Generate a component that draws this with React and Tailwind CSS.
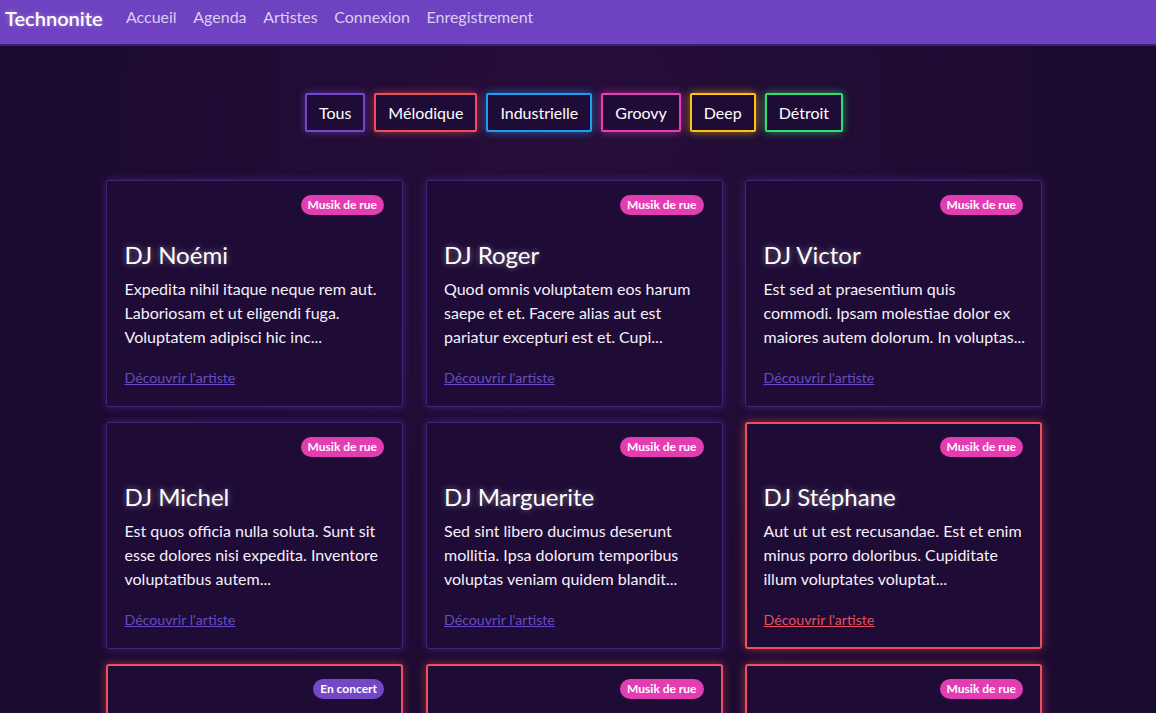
import React from "react";

const filters = [
  { label: "Tous", cls: "border-[#7446c9] shadow-[0_0_8px_rgba(116,70,201,0.6)]" },
  { label: "Mélodique", cls: "border-[#ee4d5c] shadow-[0_0_8px_rgba(238,77,92,0.6)]" },
  { label: "Industrielle", cls: "border-[#1f9cf0] shadow-[0_0_8px_rgba(31,156,240,0.6)]" },
  { label: "Groovy", cls: "border-[#e83fb5] shadow-[0_0_8px_rgba(232,63,181,0.6)]" },
  { label: "Deep", cls: "border-[#ffc20e] shadow-[0_0_8px_rgba(255,194,14,0.6)]" },
  { label: "Détroit", cls: "border-[#2ee06f] shadow-[0_0_8px_rgba(46,224,111,0.6)]" },
];

const cards = [
  { name: "DJ Noémi", lines: ["Expedita nihil itaque neque rem aut.", "Laboriosam et ut eligendi fuga.", "Voluptatem adipisci hic inc..."], badge: "rue", red: false },
  { name: "DJ Roger", lines: ["Quod omnis voluptatem eos harum", "saepe et et. Facere alias aut est", "pariatur excepturi est et. Cupi..."], badge: "rue", red: false },
  { name: "DJ Victor", lines: ["Est sed at praesentium quis", "commodi. Ipsam molestiae dolor ex", "maiores autem dolorum. In voluptas..."], badge: "rue", red: false },
  { name: "DJ Michel", lines: ["Est quos officia nulla soluta. Sunt sit", "esse dolores nisi expedita. Inventore", "voluptatibus autem..."], badge: "rue", red: false },
  { name: "DJ Marguerite", lines: ["Sed sint libero ducimus deserunt", "mollitia. Ipsa dolorum temporibus", "voluptas veniam quidem blandit..."], badge: "rue", red: false },
  { name: "DJ Stéphane", lines: ["Aut ut ut est recusandae. Est et enim", "minus porro doloribus. Cupiditate", "illum voluptates voluptat..."], badge: "rue", red: true },
  { name: "DJ Lucas", lines: ["Et quia aut natus dolorem.", "Voluptas sed sit ipsum.", "Nihil est voluptas..."], badge: "concert", red: true },
  { name: "DJ Pauline", lines: ["Qui aut est dolores.", "Rerum nihil molestias.", "Odit sint..."], badge: "rue", red: true },
  { name: "DJ Hugo", lines: ["Sint quia et in.", "Velit omnis minus.", "Quo est..."], badge: "rue", red: true },
];

function Card({ c }) {
  const border = c.red
    ? "border-2 border-[#ef4f5c] shadow-[0_0_10px_rgba(239,79,92,0.55)]"
    : "border border-[#3f2576] shadow-[0_0_9px_rgba(100,55,190,0.45)]";
  return (
    <div className={`bg-[#1e0b36] rounded-[3px] ${border} ${c.red ? "px-[16.5px] pt-[13px] pb-[17px]" : "px-[17.5px] pt-[14px] pb-[18px]"}`}>
      <div className="flex justify-end h-[20px] pr-[0.5px]">
        {c.badge === "rue" ? (
          <span className="h-[20px] px-[7px] rounded-full bg-[#e43db4] text-white text-[12px] font-bold leading-[20px]">Musik de rue</span>
        ) : (
          <span className="h-[20px] px-[7px] rounded-full bg-[#7447c6] text-white text-[12px] font-bold leading-[20px]">En concert</span>
        )}
      </div>
      <h2 className="mt-[25px] text-[24px] leading-[29px] text-white [text-shadow:0_0_6px_rgba(255,255,255,0.45)]">{c.name}</h2>
      <p className="mt-[8px] text-[16px] leading-[24px] text-[#f6f0fb]">
        {c.lines.map((l, i) => (
          <span key={i} className="block whitespace-nowrap">{l}</span>
        ))}
      </p>
      <a className={`block mt-[19px] text-[14.2px] leading-[20px] underline ${c.red ? "text-[#e9505d]" : "text-[#664bc6]"}`}>Découvrir l'artiste</a>
    </div>
  );
}

export default function App() {
  return (
    <div className="min-h-[713px] h-[713px] overflow-hidden bg-[#1c0b31] font-['Lato','Noto_Sans',sans-serif]">
      <nav className="h-[46px] bg-[#6f42c1] border-b-2 border-[#3b1f74] flex items-start pt-[3px] pl-[5px]">
        <span className="text-white text-[20px] leading-[30px] font-semibold mr-[15px] [text-shadow:0_0_4px_rgba(255,255,255,0.35)]">Technonite</span>
        {["Accueil", "Agenda", "Artistes", "Connexion", "Enregistrement"].map((l) => (
          <a key={l} className="px-[8.3px] text-[16px] leading-[28px] text-[#dccdf3]">{l}</a>
        ))}
      </nav>
      <div className="bg-[radial-gradient(ellipse_at_50%_10%,#260e39_0%,#1c0b31_60%)]">
        <div className="flex justify-center gap-[9px] pt-[47px] pr-[8px]">
          {filters.map((f) => (
            <button key={f.label} className={`h-[39px] px-[12px] border-2 rounded-[2px] bg-[#1e0b36] text-white text-[16px] ${f.cls}`}>
              {f.label}
            </button>
          ))}
        </div>
        <div className="ml-[106px] w-[936px] mt-[48px] grid grid-cols-3 gap-x-[22.5px] gap-y-[15px]">
          {cards.map((c) => (
            <Card key={c.name} c={c} />
          ))}
        </div>
      </div>
    </div>
  );
}
